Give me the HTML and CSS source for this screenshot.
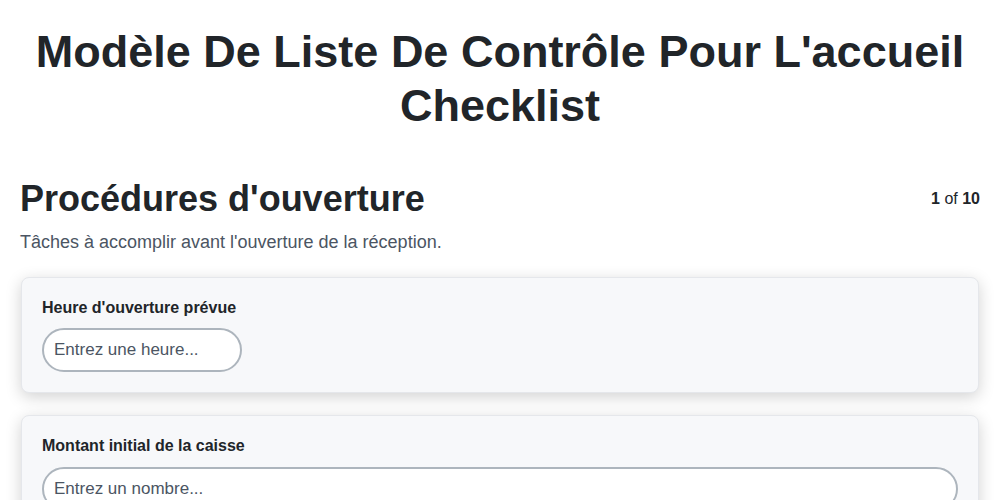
FILE: index.html
```html
<!DOCTYPE html>
<html lang="fr">
<head>
  <meta charset="UTF-8">
  <title>Checklist</title>
  <meta name="viewport" content="width=device-width, initial-scale=1.0">
  <link rel="stylesheet" href="styles.css">
</head>
<body>

  <h1 class="title">Modèle De Liste De Contrôle Pour L'accueil Checklist</h1>

  <div class="section-head">
    <h2>Procédures d'ouverture</h2>
    <div class="counter"><b>1</b> of <b>10</b></div>
  </div>
  <p class="section-desc">Tâches à accomplir avant l'ouverture de la réception.</p>

  <div class="card">
    <label class="field-label" for="openTime">Heure d'ouverture prévue</label>
    <input class="field short" id="openTime" type="text" placeholder="Entrez une heure...">
  </div>

  <div class="card">
    <label class="field-label" for="cashStart">Montant initial de la caisse</label>
    <input class="field" id="cashStart" type="text" placeholder="Entrez un nombre...">
  </div>

</body>
</html>
```

FILE: styles.css
```css
* {
  box-sizing: border-box;
  font-family: 'Liberation Sans', Arial, sans-serif;
}

body {
  margin: 0;
  padding: 0 20px;
  background: #fff;
  color: #212529;
}

.title {
  font-size: 45px;
  line-height: 1.2;
  font-weight: bold;
  text-align: center;
  margin: 25px 0 44px;
}

.section-head {
  display: flex;
  justify-content: space-between;
  align-items: center;
}

.section-head h2 {
  font-size: 36px;
  line-height: 1.2;
  margin: 0;
}

.counter {
  font-size: 16px;
  line-height: 1.5;
}

.section-desc {
  font-size: 18px;
  line-height: 1.5;
  color: #4b5563;
  margin: 9px 0 21px;
}

.card {
  background: #f7f8fa;
  border: 1px solid #e5e7eb;
  border-radius: 8px;
  padding: 20px;
  margin: 0 1px 22px;
  box-shadow: 0 4px 16px rgba(0, 0, 0, 0.18);
}

.field-label {
  display: block;
  font-size: 16px;
  line-height: 1.2;
  font-weight: bold;
  margin-bottom: 11px;
}

.field {
  display: block;
  width: 100%;
  height: 44px;
  padding: 10px 10px;
  font-size: 17px;
  color: #212529;
  background: #fff;
  border: 2px solid #adb5bd;
  border-radius: 22px;
  outline: none;
}

.field::placeholder {
  color: #4b5563;
}

.field.short {
  width: 200px;
}
```
